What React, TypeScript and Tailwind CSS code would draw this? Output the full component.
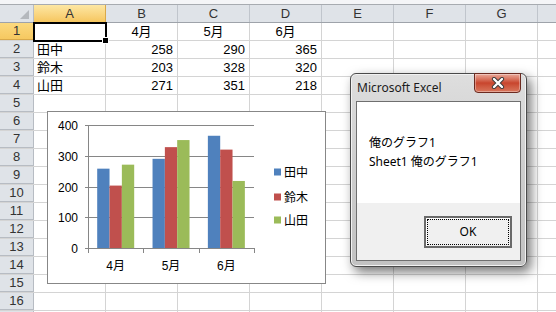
import React from "react";

const COLS = ["A", "B", "C", "D", "E", "F", "G"];

type Row = (string | number | null)[];
const DATA: Row[] = [
  [null, "4月", "5月", "6月"],
  ["田中", 258, 290, 365],
  ["鈴木", 203, 328, 320],
  ["山田", 271, 351, 218],
];

const SERIES = [
  { name: "田中", color: "#4f81bd", values: [258, 290, 365] },
  { name: "鈴木", color: "#c0504d", values: [203, 328, 320] },
  { name: "山田", color: "#9bbb59", values: [271, 351, 218] },
];

const FONT = { fontFamily: '"Liberation Sans", "Noto Sans CJK JP", sans-serif' };

function Cell({ value, col }: { value: string | number | null; col: number }) {
  let align = "justify-start pl-[3px]";
  if (typeof value === "number") align = "justify-end pr-[4px]";
  else if (col > 0 && value) align = "justify-center";
  return (
    <div
      className={`w-[72px] shrink-0 h-full border-r border-[#d4d4d4] flex items-center ${align} text-[13px] text-black leading-none`}
    >
      {value !== null && value !== undefined ? value : ""}
    </div>
  );
}

function Chart() {
  const zeroY = 136;
  const scale = 123 / 400;
  const catW = 166 / 3;
  const grid = [136, 105, 75, 44, 13];
  const labels = ["0", "100", "200", "300", "400"];
  const cats = ["4月", "5月", "6月"];
  return (
    <div className="absolute left-[47px] top-[111px] w-[279px] h-[173px] border border-[#878787] bg-white">
      <svg width="277" height="171" className="block">
        {grid.map((y, i) => (
          <line key={i} x1={37} x2={206} y1={y + 0.5} y2={y + 0.5} stroke="#868686" strokeWidth={1} />
        ))}
        <line x1={40.5} x2={40.5} y1={13} y2={137} stroke="#868686" strokeWidth={1} />
        {[0, 1, 2, 3].map((i) => {
          const x = Math.round(40 + i * catW) + 0.5;
          return <line key={i} x1={x} x2={x} y1={136} y2={141} stroke="#868686" strokeWidth={1} />;
        })}
        {SERIES.map((s, si) =>
          s.values.map((v, ci) => {
            const x = 40 + ci * catW + 9.2 + si * 12.33;
            const h = v * scale;
            return <rect key={`${si}-${ci}`} x={x} y={zeroY - h} width={12.33} height={h} fill={s.color} />;
          })
        )}
        {grid.map((y, i) => (
          <text key={i} x={30} y={y + 4.5} textAnchor="end" fontSize={12} fill="#000" style={FONT}>
            {labels[i]}
          </text>
        ))}
        {cats.map((c, i) => (
          <text
            key={c}
            x={40 + i * catW + catW / 2}
            y={158}
            textAnchor="middle"
            fontSize={12}
            fill="#000"
            style={FONT}
          >
            {c}
          </text>
        ))}
        {SERIES.map((s, i) => {
          const cy = [60, 85, 108][i];
          return (
            <g key={s.name}>
              <rect x={226} y={cy - 3.5} width={7} height={7} fill={s.color} />
              <text x={236} y={cy + 4.5} fontSize={12} fill="#000" style={FONT}>
                {s.name}
              </text>
            </g>
          );
        })}
      </svg>
    </div>
  );
}

function Dialog() {
  return (
    <div
      className="absolute left-[350px] top-[73px] w-[177px] h-[194px] rounded-[6px] border border-[#4a4a4a] bg-linear-to-b from-[#dedede] via-[#cdcdcd] to-[#c2c2c2] shadow-[4px_5px_12px_rgba(0,0,0,0.55),inset_0_0_0_1px_#f2f2f2]"
      style={{ fontFamily: '"Noto Sans", "Noto Sans CJK JP", sans-serif' }}
    >
      <div className="h-[27px] flex items-center pl-[6px] text-[12px] text-[#1b1b1b]">Microsoft Excel</div>
      <div className="absolute right-[5px] top-[-1px] w-[47px] h-[20px] rounded-b-[4px] border border-[#6b2a20] bg-linear-to-b from-[#e9a99a] via-[#c8452d] to-[#d8765c] flex items-center justify-center shadow-[inset_0_0_0_1px_rgba(255,255,255,0.35)]">
        <svg width="14" height="12" viewBox="0 0 14 12">
          <path d="M3 2 L11 10 M11 2 L3 10" stroke="#3a3a3a" strokeWidth="4.2" strokeLinecap="round" />
          <path d="M3 2 L11 10 M11 2 L3 10" stroke="#ffffff" strokeWidth="2.4" strokeLinecap="round" />
        </svg>
      </div>
      <div className="mx-[5px] h-[160px] border border-[#6f6f6f] flex flex-col">
        <div className="h-[101px] bg-white pl-[12px] pt-[31px] text-[12px] text-black leading-[19px]">
          <div>俺のグラフ1</div>
          <div>Sheet1 俺のグラフ1</div>
        </div>
        <div className="flex-1 bg-[#f0f0f0] flex justify-end items-start pt-[13px] pr-[8px]">
          <div className="w-[88px] h-[32px] border-2 border-[#6a6a6a] bg-[#f0f0f0] p-[1px] shadow-[inset_1px_1px_0_#ffffff]">
            <div className="w-full h-full border border-dotted border-black flex items-center justify-center text-[12px] text-black">
              OK
            </div>
          </div>
        </div>
      </div>
    </div>
  );
}

export default function App() {
  const rows = Array.from({ length: 16 }, (_, i) => i + 1);
  return (
    <div className="relative w-[556px] h-[312px] overflow-hidden bg-white flex flex-col" style={FONT}>
      <div className="h-[5px] shrink-0 bg-[#f4f5f7] border-b border-[#a7abb0]" />
      <div className="flex h-[18px] shrink-0 border-b border-[#9ea3aa] bg-[#dfe3e8]">
        <div className="w-[34px] shrink-0 h-full border-r border-[#b7bcc3] relative">
          <svg width="10" height="10" className="absolute right-[3px] bottom-[2px]">
            <path d="M9 0 L9 9 L0 9 Z" fill="#b4b8bd" />
          </svg>
        </div>
        {COLS.map((c, i) => (
          <div
            key={c}
            className={`w-[72px] shrink-0 h-full border-r border-[#c0c5cc] flex items-center justify-center text-[13px] text-[#333] ${
              i === 0 ? "bg-linear-to-b from-[#fde7a3] to-[#f6c65e] border-[#d9a94a]" : ""
            }`}
          >
            {c}
          </div>
        ))}
        <div className="flex-1" />
      </div>
      {rows.map((r) => {
        const data = DATA[r - 1];
        return (
          <div key={r} className="flex h-[18px] shrink-0 border-b border-[#d4d4d4]">
            <div
              className={`w-[34px] shrink-0 h-full border-r border-b border-[#b7bcc3] flex items-center justify-center text-[13px] text-[#333] -mb-px ${
                r === 1 ? "bg-linear-to-b from-[#fbd97e] to-[#f6c860] border-[#d9a94a]" : "bg-[#dfe3e8]"
              }`}
            >
              {r}
            </div>
            {COLS.map((c, ci) => (
              <Cell key={c} col={ci} value={data ? data[ci] ?? null : null} />
            ))}
            <div className="flex-1" />
          </div>
        );
      })}
      <div className="flex flex-1">
        <div className="w-[34px] shrink-0 h-full border-r border-[#b7bcc3] bg-[#dfe3e8]" />
        {COLS.map((c) => (
          <div key={c} className="w-[72px] shrink-0 h-full border-r border-[#d4d4d4]" />
        ))}
      </div>
      <div className="absolute left-[33px] top-[22px] w-[74px] h-[20px] border-2 border-black" />
      <div className="absolute left-[102px] top-[37px] w-[7px] h-[7px] bg-black border border-white" />
      <Chart />
      <Dialog />
    </div>
  );
}
